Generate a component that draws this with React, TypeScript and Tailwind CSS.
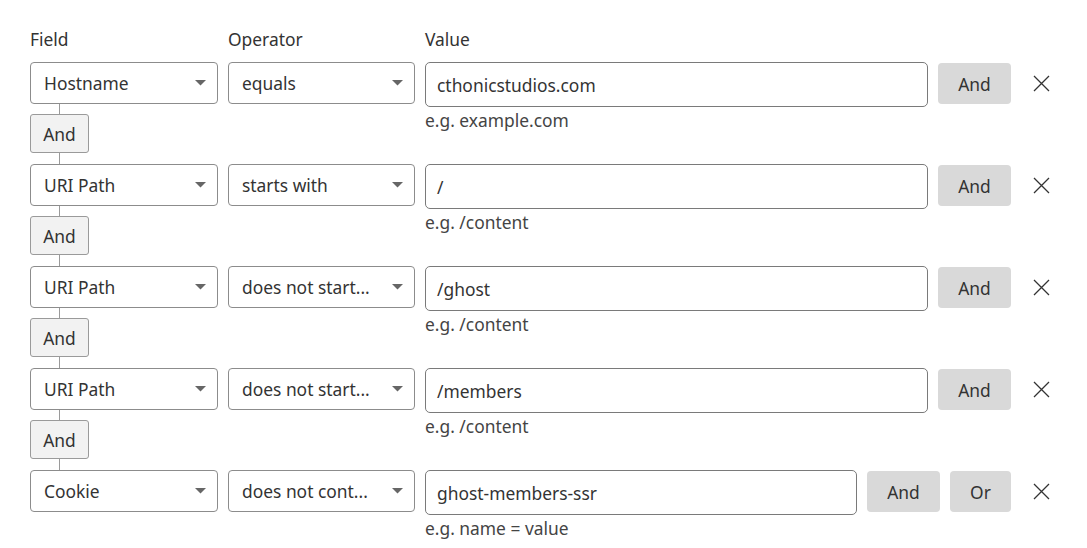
import { Fragment } from "react";

type Rule = {
  field: string;
  operator: string;
  value: string;
  hint: string;
  last?: boolean;
};

const RULES: Rule[] = [
  { field: "Hostname", operator: "equals", value: "cthonicstudios.com", hint: "e.g. example.com" },
  { field: "URI Path", operator: "starts with", value: "/", hint: "e.g. /content" },
  { field: "URI Path", operator: "does not start...", value: "/ghost", hint: "e.g. /content" },
  { field: "URI Path", operator: "does not start...", value: "/members", hint: "e.g. /content" },
  { field: "Cookie", operator: "does not cont...", value: "ghost-members-ssr", hint: "e.g. name = value", last: true },
];

function Caret() {
  return (
    <svg width="11" height="6" viewBox="0 0 11 6" className="shrink-0">
      <path d="M0 0 L11 0 L5.5 5.5 Z" fill="#666666" />
    </svg>
  );
}

function FakeSelect({ label, width }: { label: string; width: string }) {
  return (
    <div
      className={`flex h-[42px] ${width} shrink-0 items-center justify-between rounded-[4px] border border-[#8c8c8c] bg-white pl-[13px] pr-[11px] text-[#333333]`}
    >
      <span className="truncate">{label}</span>
      <Caret />
    </div>
  );
}

function Connector() {
  return (
    <div className="flex w-[59px] flex-col items-center">
      <div className="h-[10px] w-px bg-[#9a9a9a]" />
      <button
        type="button"
        className="h-[39px] w-[59px] rounded-[3px] border border-[#9a9a9a] bg-[#f2f2f2] text-[#333333]"
      >
        And
      </button>
      <div className="h-[11px] w-px bg-[#9a9a9a]" />
    </div>
  );
}

function CloseIcon() {
  return (
    <svg width="17" height="17" viewBox="0 0 17 17">
      <path d="M1 1 L16 16 M16 1 L1 16" stroke="#333333" strokeWidth="1.3" fill="none" />
    </svg>
  );
}

export default function App() {
  return (
    <div
      className="min-h-screen bg-white pl-[30px] pt-[27px] text-[17.4px] leading-[24px] text-[#333333]"
      style={{ fontFamily: '"Noto Sans", "Open Sans", sans-serif' }}
    >
      <div className="w-[1027px]">
        {/* Header labels */}
        <div className="mb-[11px] flex gap-[10px]">
          <div className="w-[188px]">Field</div>
          <div className="w-[187px]">Operator</div>
          <div>Value</div>
        </div>

        {RULES.map((r, i) => (
          <Fragment key={i}>
            <div className="flex items-start gap-[10px]">
              <div className="flex w-[188px] shrink-0 flex-col">
                <FakeSelect label={r.field} width="w-[188px]" />
                {!r.last && <Connector />}
              </div>
              <FakeSelect label={r.operator} width="w-[187px]" />

              <div className="min-w-0 flex-1">
                <div className="flex h-[45px] items-center rounded-[5px] border border-[#7a7a7a] bg-white pl-[11px]">
                  {r.value}
                </div>
                <p className="mt-px text-[#444444]">{r.hint}</p>
              </div>

              <button
                type="button"
                className="mt-px h-[41px] w-[73px] shrink-0 rounded-[4px] bg-[#d9d9d9] text-[#333333]"
              >
                And
              </button>
              {r.last && (
                <button
                  type="button"
                  className="mt-px h-[41px] w-[61px] shrink-0 rounded-[4px] bg-[#d9d9d9] text-[#333333]"
                >
                  Or
                </button>
              )}
              <button
                type="button"
                aria-label="Remove"
                className="ml-[4px] mt-px flex h-[41px] w-[32px] shrink-0 items-center justify-center"
              >
                <CloseIcon />
              </button>
            </div>
          </Fragment>
        ))}
      </div>
    </div>
  );
}
